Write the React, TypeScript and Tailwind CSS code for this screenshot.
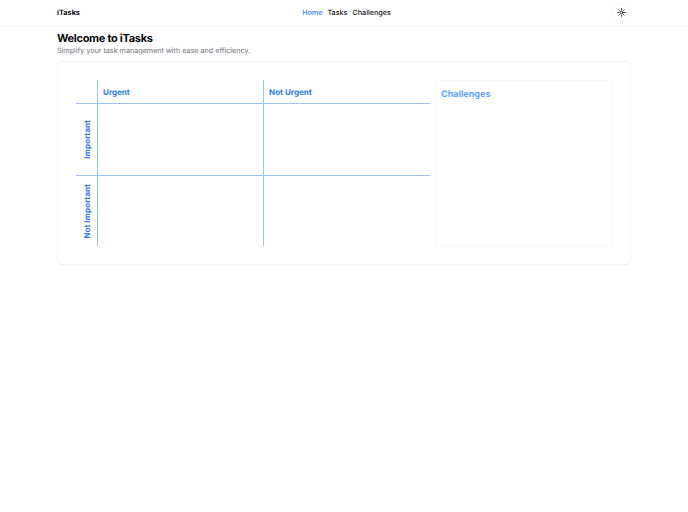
import React from 'react';
import { Sun } from 'lucide-react';

const App: React.FC = () => {
  return (
    <div className="min-h-[512px] bg-white font-['Inter',sans-serif] antialiased opacity-[0.999] [text-rendering:geometricPrecision]">
      {/* Header */}
      <header className="h-[26px] border-b border-[#f1f1f3] pt-[1px] px-[57px] grid grid-cols-[1fr_auto_1fr] items-center">
        <span className="text-[7.3px] font-bold text-[#09090b]">iTasks</span>
        <nav className="ml-[5px] flex gap-[5px] text-[7.2px] font-medium text-[#18181b]">
          <span className="text-[#3b82f6]">Home</span>
          <span>Tasks</span>
          <span>Challenges</span>
        </nav>
        <div className="flex justify-end">
          <button className="mb-[1px] mr-[1px] w-[18px] h-[18px] border border-[#f7f7f8] rounded-[3px] flex items-center justify-center text-[#18181b]">
            <Sun size={9} strokeWidth={2.5} />
          </button>
        </div>
      </header>

      <main className="px-[57px] pt-[5px]">
        <h1 className="text-[11px] leading-[15px] font-bold tracking-[-0.3px] text-[#09090b]">Welcome to iTasks</h1>
        <p className="text-[7.2px] leading-[10px] text-[#71717a]">Simplify your task management with ease and efficiency.</p>

        {/* Card */}
        <div className="mt-[5px] h-[204px] border border-[#f1f1f3] rounded-[5px] pl-[18px] pr-[17px] py-[18px] flex gap-[5px]">
          {/* Matrix */}
          <div className="w-[354px] h-[166px] grid grid-cols-[21px_166px_167px] grid-rows-[24px_72px_70px] text-[8.05px] font-bold text-[#2f7be6]">
            <div className="border-b border-[#9fc2f5]" />
            <div className="border-b border-l border-[#9fc2f5] flex items-center pl-[5px] pt-[1px]">Urgent</div>
            <div className="border-b border-l border-[#9fc2f5] flex items-center pl-[5px] pt-[1px]">Not Urgent</div>

            <div className="border-b border-[#9fc2f5] flex items-center justify-center pl-[2px]">
              <span className="[writing-mode:vertical-rl] rotate-180">Important</span>
            </div>
            <div className="border-b border-l border-[#9fc2f5]" />
            <div className="border-b border-l border-[#9fc2f5]" />

            <div className="flex items-center justify-center pl-[2px]">
              <span className="[writing-mode:vertical-rl] rotate-180">Not Important</span>
            </div>
            <div className="border-l border-[#9fc2f5]" />
            <div className="border-l border-[#9fc2f5]" />
          </div>

          {/* Challenges */}
          <div className="w-[178px] h-[166px] border border-[#f7f7f8] rounded-[2px] px-[5px] pt-[7px]">
            <h2 className="text-[9px] leading-[13px] font-bold text-[#60a5fa]">Challenges</h2>
          </div>
        </div>
      </main>
    </div>
  );
};

export default App;
